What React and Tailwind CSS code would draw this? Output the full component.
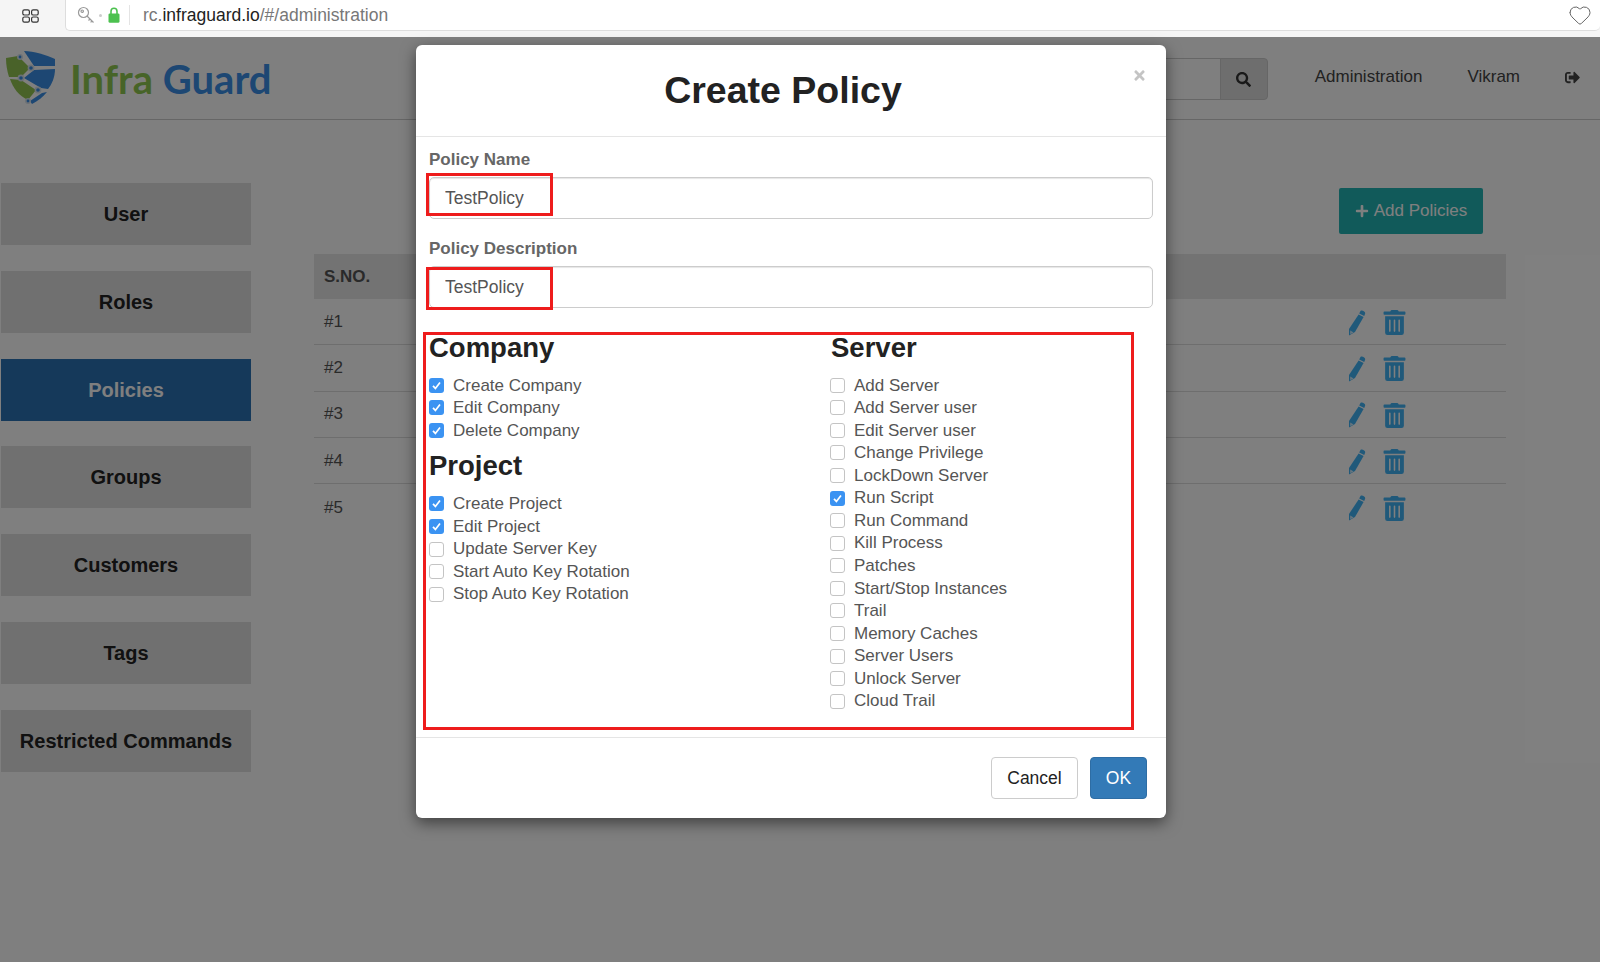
import { FaPlus, FaSearch, FaSignOutAlt, FaTimes, FaTrashAlt } from "react-icons/fa"
import { Heart } from "lucide-react"

const sideItems = ["User", "Roles", "Policies", "Groups", "Customers", "Tags", "Restricted Commands"]
const rows = ["#1", "#2", "#3", "#4", "#5"]
const company = [
  ["Create Company", true],
  ["Edit Company", true],
  ["Delete Company", true],
]
const project = [
  ["Create Project", true],
  ["Edit Project", true],
  ["Update Server Key", false],
  ["Start Auto Key Rotation", false],
  ["Stop Auto Key Rotation", false],
]
const server = [
  ["Add Server", false],
  ["Add Server user", false],
  ["Edit Server user", false],
  ["Change Privilege", false],
  ["LockDown Server", false],
  ["Run Script", true],
  ["Run Command", false],
  ["Kill Process", false],
  ["Patches", false],
  ["Start/Stop Instances", false],
  ["Trail", false],
  ["Memory Caches", false],
  ["Server Users", false],
  ["Unlock Server", false],
  ["Cloud Trail", false],
]

function ShieldLogo() {
  return (
    <svg width="52" height="56" viewBox="4 8 52 56">
      <path d="M5 17 L17 15 L29 27 L20 36 L8 36 C6 30 5 23 5 17Z" fill="#92c552" />
      <path d="M9 38 L20 39 L35 49 L27 59 C18 55 12 47 9 38Z" fill="#92c552" />
      <path d="M23 10 C33 10 45 14 54 18 L54 25 L33 25 Z" fill="#3a8fe6" />
      <path d="M33 29 L54 28 C54 36 51 43 47 48 L40 47 L23 37Z" fill="#3a8fe6" />
      <path d="M41 52 L46 51 C42 56 37 60 31 63 L29 60Z" fill="#3a8fe6" />
      <g fill="#3a8fe6" stroke="#d8e2ec" strokeWidth="1.6">
        <circle cx="19" cy="16" r="2.2" />
        <circle cx="30" cy="27" r="2.6" />
        <circle cx="20" cy="37" r="2.6" />
        <circle cx="37" cy="49" r="2.6" />
        <circle cx="27" cy="60" r="2.2" />
      </g>
    </svg>
  )
}

function PencilIcon() {
  return (
    <svg width="18" height="26" viewBox="0 0 18 26">
      <path d="M12.6 0.8 C14.4 0 17.4 1.6 17.2 3.6 L16.2 6 L11.2 3.4Z" fill="#41b3f5" />
      <path d="M10.6 4.4 L15.6 7 L7 22 L1 25.4 L1 19Z" fill="#41b3f5" />
      <path d="M2.2 20.6 L5.6 22.4 L2.2 24.2Z" fill="#cfeafc" />
    </svg>
  )
}

function GridIcon() {
  return (
    <svg width="17" height="14" viewBox="0 0 17 14" fill="none" stroke="#333" strokeWidth="1.2">
      <rect x="0.8" y="0.8" width="6.6" height="5.2" rx="1.6" />
      <rect x="9.6" y="0.8" width="6.6" height="5.2" rx="1.6" />
      <rect x="0.8" y="8" width="6.6" height="5.2" rx="1.6" />
      <rect x="9.6" y="8" width="6.6" height="5.2" rx="1.6" />
    </svg>
  )
}

function KeyIcon() {
  return (
    <svg width="18" height="18" viewBox="0 0 18 18" fill="none" stroke="#999" strokeWidth="1.2">
      <circle cx="6.5" cy="6.5" r="5" />
      <circle cx="5.2" cy="5.2" r="1.2" />
      <path d="M10 10 L16.5 16.5 M13 13 L11.5 14.5 M15 15 L13.6 16.4" />
    </svg>
  )
}

function LockIcon() {
  return (
    <svg width="12" height="16" viewBox="0 0 12 16">
      <path d="M3 7 V4.4 C3 2.6 4.2 1.2 6 1.2 C7.8 1.2 9 2.6 9 4.4 V7" fill="none" stroke="#4cc14f" strokeWidth="1.6" />
      <rect x="0.5" y="6.4" width="11" height="9.4" rx="1.4" fill="#4cc14f" />
    </svg>
  )
}

function CheckItem({ label, checked }) {
  return (
    <div className="flex items-center h-[22.57px] text-[17px] text-[#555]">
      {checked ? (
        <span className="flex items-center justify-center w-[15px] h-[15px] rounded-[3px] bg-[#3b93f2] shrink-0">
          <svg width="11" height="11" viewBox="0 0 11 11" fill="none" stroke="#fff" strokeWidth="1.7">
            <path d="M2 5.8 L4.4 8.4 L9 2.4" />
          </svg>
        </span>
      ) : (
        <span className="w-[15px] h-[15px] rounded-[3px] bg-white border border-[#c4c4c4] shrink-0" />
      )}
      <span className="ml-[9px]">{label}</span>
    </div>
  )
}

function Field({ label, top, boxTop }) {
  return (
    <div className={top}>
      <div className="text-[17px] leading-[20px] font-bold text-[#666]">{label}</div>
      <div className="relative mt-[7px]">
        <input
          readOnly
          value="TestPolicy"
          className="block w-[724px] h-[42px] pl-[15px] text-[17.5px] text-[#555] bg-white border border-[#ccc] rounded-[5px] outline-none shadow-[inset_0_1px_1px_rgba(0,0,0,0.1)]"
        />
        <div className={`absolute left-[-3px] w-[127px] h-[43px] border-[3px] border-[#ee1c1c] ${boxTop}`} />
      </div>
    </div>
  )
}

export default function App() {
  return (
    <div className="relative w-[1600px] h-[962px] overflow-hidden bg-white font-['Liberation_Sans',Arial,sans-serif]">
      {/* Browser bar */}
      <div className="flex h-[37px] bg-[#f5f5f5]">
        <div className="flex items-center justify-center w-[65px] h-[31px] pr-[4px]">
          <GridIcon />
        </div>
        <div className="flex flex-1 items-center h-[31px] pl-[11px] pr-[8px] bg-white border-b border-l border-[#ddd] rounded-b-[5px]">
          <KeyIcon />
          <span className="w-[3px] h-[3px] ml-[4px] rounded-full bg-[#ccc]" />
          <span className="ml-[6px]">
            <LockIcon />
          </span>
          <span className="w-px h-[20px] ml-[9px] bg-[#e4e4e4]" />
          <span className="ml-[13px] text-[17.5px] text-[#777]">
            rc.<span className="text-[#222]">infraguard.io</span>/#/administration
          </span>
          <Heart className="ml-auto text-[#666]" size={24} strokeWidth={1} />
        </div>
      </div>

      {/* App navbar */}
      <div className="flex items-center h-[83px] border-b border-[#ccc]">
        <div className="ml-[5px] mt-[-2px]">
          <ShieldLogo />
        </div>
        <div className="ml-[13px] mt-[2px] text-[40px] font-bold font-['Lato',sans-serif] whitespace-nowrap">
          <span className="text-[#8fc951]">Infra</span> <span className="text-[#3a8fe6]">Guard</span>
        </div>
        <div className="flex items-center ml-auto">
          <div className="flex mt-[2px] mr-[2px]">
            <div className="w-[110px] h-[42px] bg-white border border-[#ccc]" />
            <div className="flex items-center justify-center w-[48px] h-[42px] ml-[-1px] bg-[#ddd] border border-[#ccc] rounded-r-[4px]">
              <FaSearch className="text-[15px] text-[#333]" />
            </div>
          </div>
          <div className="flex items-center mt-[-2px]">
            <span className="ml-[45px] text-[17px] text-[#444]">Administration</span>
            <span className="ml-[45px] text-[17px] text-[#444]">Vikram</span>
            <FaSignOutAlt className="ml-[45px] mr-[20px] text-[15px] text-[#444]" />
          </div>
        </div>
      </div>

      {/* Page body */}
      <div className="flex bg-white">
        <div className="w-[250px] ml-[1px] pt-[63px]">
          {sideItems.map((item) => (
            <div
              key={item}
              className={
                item === "Policies"
                  ? "flex items-center justify-center h-[62px] mb-[25.8px] text-[20px] font-bold text-white bg-[#2a72b5]"
                  : "flex items-center justify-center h-[62px] mb-[25.8px] text-[20px] font-bold text-[#222] bg-[#e0e0e0]"
              }
            >
              {item}
            </div>
          ))}
        </div>
        <div className="w-[1192px] ml-[63px]">
          <div className="flex justify-end pt-[68px] pr-[23px]">
            <div className="flex items-center justify-center w-[144px] h-[46px] bg-[#23b5b5] text-[17px] text-white rounded-[2px]">
              <FaPlus className="mr-[5px] text-[14px]" />
              Add Policies
            </div>
          </div>
          <div className="mt-[20px] h-[45px] flex items-center pl-[10px] bg-[#e6e6e6] text-[17px] font-bold text-[#555]">
            S.NO.
          </div>
          {rows.map((row) => (
            <div key={row} className="flex items-center h-[46.3px] pl-[10px] border-b border-[#ddd] last:border-b-0 text-[17px] text-[#555]">
              {row}
              <div className="flex items-center gap-[16px] ml-auto mr-[99px] mt-[2px] text-[#41b3f5]">
                <PencilIcon />
                <FaTrashAlt className="text-[25px]" />
              </div>
            </div>
          ))}
        </div>
      </div>

      {/* Modal backdrop */}
      <div className="absolute inset-x-0 top-[37px] bottom-0 bg-black/50">
        <div className="w-[750px] h-[773px] ml-[416px] mt-[8px] bg-white rounded-[6px] shadow-[0_5px_15px_rgba(0,0,0,0.5)] flex flex-col">
          <div className="relative flex items-center justify-center h-[92px] border-b border-[#e5e5e5]">
            <h1 className="ml-[-16px] text-[37.5px] font-bold text-[#222]">Create Policy</h1>
            <FaTimes className="absolute right-[19px] top-[23px] text-[15px] text-[#c4c4c4]" />
          </div>
          <div className="flex-1 pl-[13px]">
            <Field label="Policy Name" top="mt-[13px]" boxTop="top-[-4px]" />
            <Field label="Policy Description" top="mt-[20px]" boxTop="top-[1px]" />
            <div className="flex ml-[-6px] mt-[24px] w-[711px] h-[398px] pl-[3px] border-[3px] border-[#ee1c1c]">
              <div className="w-[402px]">
                <h2 className="text-[27.5px] leading-[26px] font-bold text-[#222]">Company</h2>
                <div className="mt-[13px]">
                  {company.map(([label, checked]) => (
                    <CheckItem key={label} label={label} checked={checked} />
                  ))}
                </div>
                <h2 className="mt-[11px] text-[27.5px] leading-[26px] font-bold text-[#222]">Project</h2>
                <div className="mt-[14px]">
                  {project.map(([label, checked]) => (
                    <CheckItem key={label} label={label} checked={checked} />
                  ))}
                </div>
              </div>
              <div>
                <h2 className="text-[27.5px] leading-[26px] font-bold text-[#222]">Server</h2>
                <div className="mt-[13px] ml-[-1px]">
                  {server.map(([label, checked]) => (
                    <CheckItem key={label} label={label} checked={checked} />
                  ))}
                </div>
              </div>
            </div>
          </div>
          <div className="flex items-center justify-end gap-[12px] h-[81px] pr-[19px] border-t border-[#e5e5e5]">
            <button className="w-[87px] h-[42px] text-[17.5px] text-[#222] bg-white border border-[#ccc] rounded-[4px]">Cancel</button>
            <button className="w-[57px] h-[42px] text-[17.5px] text-white bg-[#337ab7] border border-[#2e6da4] rounded-[4px]">OK</button>
          </div>
        </div>
      </div>
    </div>
  )
}
